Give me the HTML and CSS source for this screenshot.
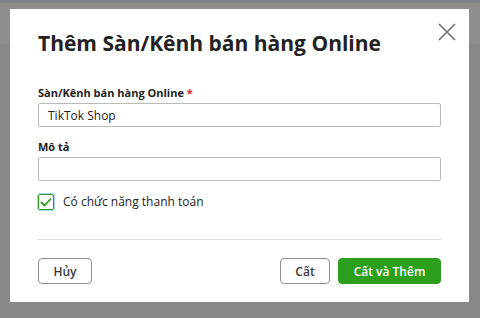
FILE: index.html
```html
<!DOCTYPE html>
<html lang="vi">
<head>
    <meta charset="UTF-8">
    <meta name="viewport" content="width=device-width, initial-scale=1.0">
    <title>Thêm Sàn/Kênh bán hàng Online</title>
    <link rel="stylesheet" href="styles.css">
</head>
<body>
    <div class="page">
        <div class="topbar"></div>
        <div class="toolbar"></div>
        <div class="content"></div>
    </div>

    <div class="overlay">
        <div class="dialog">
            <button class="close-button" aria-label="Đóng">
                <svg width="18" height="18" viewBox="0 0 18 18">
                    <path d="M1 1L17 17M17 1L1 17" stroke="#6f6f6f" stroke-width="1.6" fill="none"/>
                </svg>
            </button>
            <h1>Thêm Sàn/Kênh bán hàng Online</h1>

            <div class="form-group">
                <label for="channel">Sàn/Kênh bán hàng Online <span class="required">*</span></label>
                <input type="text" id="channel" value="TikTok Shop">
            </div>

            <div class="form-group">
                <label for="desc">Mô tả</label>
                <input type="text" id="desc">
            </div>

            <label class="check-row">
                <span class="checkbox">
                    <svg width="12" height="10" viewBox="0 0 12 10">
                        <path d="M1 5L4.5 8.5L11 1.5" stroke="#2ca01c" stroke-width="1.8" fill="none"/>
                    </svg>
                </span>
                Có chức năng thanh toán
            </label>

            <div class="footer">
                <button class="btn btn-cancel">Hủy</button>
                <div class="footer-right">
                    <button class="btn btn-save">Cất</button>
                    <button class="btn btn-primary">Cất và Thêm</button>
                </div>
            </div>
        </div>
    </div>
</body>
</html>
```

FILE: styles.css
```css
body {
    margin: 0;
    font-family: 'Open Sans', 'Noto Sans', sans-serif;
    background: #888a8b;
    overflow: hidden;
}
.page {
    height: 318px;
}
.topbar {
    height: 3px;
    background: #7b8189;
}
.toolbar {
    height: 41px;
    background: #8e8e8e;
}
.content {
    height: 274px;
    background: #888888;
}
.overlay {
    position: fixed;
    top: 0;
    left: 0;
    right: 0;
    bottom: 0;
}
.dialog {
    position: absolute;
    left: 10px;
    top: 9px;
    width: 459px;
    height: 293px;
    box-sizing: border-box;
    padding: 20px 28px 0 28px;
    background: #fff;
}
.close-button {
    position: absolute;
    top: 13px;
    right: 12px;
    width: 20px;
    height: 20px;
    padding: 1px;
    border: none;
    background: none;
}
h1 {
    margin: 0 0 28px;
    font-size: 21px;
    font-weight: 700;
    color: #222;
    line-height: 28px;
}
.form-group {
    margin-bottom: 12px;
}
label {
    display: block;
    margin-bottom: 3px;
    font-size: 11px;
    font-weight: 700;
    color: #222;
    line-height: 15px;
}
.required {
    color: #e5202b;
}
input {
    display: block;
    width: 100%;
    height: 24px;
    padding: 0 9px;
    border: 1px solid #bababa;
    border-radius: 2px;
    font-family: inherit;
    font-size: 12px;
    color: #222;
    box-sizing: border-box;
}
.check-row {
    display: flex;
    align-items: center;
    gap: 9px;
    margin: -1px 0 0;
    font-size: 12px;
    font-weight: 400;
    line-height: 20px;
}
.checkbox {
    display: flex;
    align-items: center;
    justify-content: center;
    width: 16px;
    height: 16px;
    box-sizing: border-box;
    border: 1px solid #2ca01c;
    border-radius: 2px;
    box-shadow: 0 0 0 1px #a6d5f5;
    margin-left: 0;
}
.footer {
    display: flex;
    justify-content: space-between;
    margin-top: 27px;
    padding-top: 18px;
    border-top: 1px solid #dedede;
}
.footer-right {
    display: flex;
    gap: 8px;
}
.btn {
    height: 26px;
    padding: 0;
    border: 1px solid #8d9096;
    border-radius: 4px;
    background: #fff;
    font-family: inherit;
    font-size: 12px;
    font-weight: 600;
    color: #393a3d;
    white-space: nowrap;
    cursor: pointer;
}
.btn-cancel {
    width: 54px;
}
.btn-save {
    width: 50px;
}
.btn-primary {
    width: 103px;
    border-color: #2ca01c;
    background: #2ca01c;
    color: #fff;
}
```
